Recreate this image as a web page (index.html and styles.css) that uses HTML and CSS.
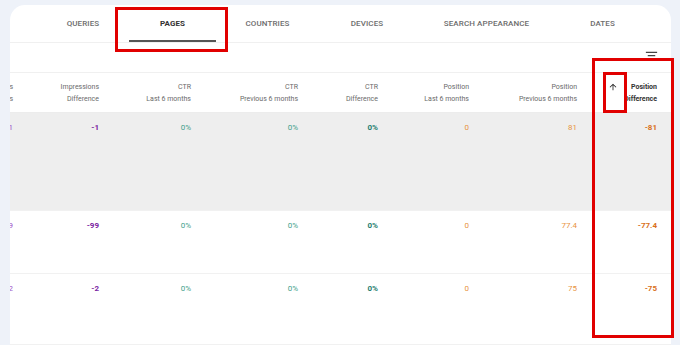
FILE: index.html
```html
<!DOCTYPE html>
<html lang="en">
<head>
    <meta charset="UTF-8">
    <meta name="viewport" content="width=device-width, initial-scale=1.0">
    <title>Pages Report</title>
    <link rel="stylesheet" href="styles.css">
</head>
<body>
    <div class="card">
        <div class="tabs">
            <div class="tab t-queries">QUERIES</div>
            <div class="tab t-pages active">PAGES</div>
            <div class="tab t-countries">COUNTRIES</div>
            <div class="tab t-devices">DEVICES</div>
            <div class="tab t-search">SEARCH APPEARANCE</div>
            <div class="tab t-dates">DATES</div>
        </div>

        <div class="toolbar">
            <svg class="filter-icon" viewBox="0 0 24 24" width="15" height="15">
                <path d="M10 18h4v-2h-4v2zM3 6v2h18V6H3zm3 7h12v-2H6v2z" fill="#444"/>
            </svg>
        </div>

        <div class="table-wrap">
            <div class="row head">
                <div class="cell">Impressions<br>Previous 6 months</div>
                <div class="cell">Impressions<br>Difference</div>
                <div class="cell">CTR<br>Last 6 months</div>
                <div class="cell">CTR<br>Previous 6 months</div>
                <div class="cell">CTR<br>Difference</div>
                <div class="cell">Position<br>Last 6 months</div>
                <div class="cell">Position<br>Previous 6 months</div>
                <div class="cell sorted">
                    <svg class="sort-arrow" viewBox="0 0 24 24" width="10" height="10">
                        <path d="M4 12l1.41 1.41L11 7.83V20h2V7.83l5.58 5.59L20 12l-8-8-8 8z" fill="#222"/>
                    </svg>
                    <span>Position<br>Difference</span>
                </div>
            </div>

            <div class="row body selected r1">
                <div class="cell imp">1</div>
                <div class="cell imp-diff">-1</div>
                <div class="cell ctr">0%</div>
                <div class="cell ctr">0%</div>
                <div class="cell ctr-diff">0%</div>
                <div class="cell pos">0</div>
                <div class="cell pos">81</div>
                <div class="cell pos-diff">-81</div>
            </div>

            <div class="row body r2">
                <div class="cell imp">99</div>
                <div class="cell imp-diff">-99</div>
                <div class="cell ctr">0%</div>
                <div class="cell ctr">0%</div>
                <div class="cell ctr-diff">0%</div>
                <div class="cell pos">0</div>
                <div class="cell pos">77.4</div>
                <div class="cell pos-diff">-77.4</div>
            </div>

            <div class="row body r3">
                <div class="cell imp">2</div>
                <div class="cell imp-diff">-2</div>
                <div class="cell ctr">0%</div>
                <div class="cell ctr">0%</div>
                <div class="cell ctr-diff">0%</div>
                <div class="cell pos">0</div>
                <div class="cell pos">75</div>
                <div class="cell pos-diff">-75</div>
            </div>
        </div>
    </div>

    <!-- annotation boxes drawn over the screenshot -->
    <div class="mark mark-tab"></div>
    <div class="mark mark-col"></div>
    <div class="mark mark-arrow"></div>
</body>
</html>
```

FILE: styles.css
```css
body {
    margin: 0;
    width: 680px;
    height: 345px;
    overflow: hidden;
    background: #eef2f9;
    font-family: Roboto, "Liberation Sans", sans-serif;
}
.card {
    margin: 5px 9px 0 10px;
    height: 340px;
    background: #fff;
    border-radius: 15px 15px 0 0;
    overflow: hidden;
}
.tabs {
    display: flex;
    height: 37px;
    padding-left: 27px;
    border-bottom: 1px solid #f0f0f0;
}
.tab {
    position: relative;
    display: flex;
    align-items: center;
    justify-content: center;
    padding-bottom: 1px;
    font-size: 8px;
    font-weight: 500;
    color: #6d6d6d;
    letter-spacing: 0.1px;
}
.t-queries { width: 92px; }
.t-pages { width: 87px; }
.t-countries { width: 103px; }
.t-devices { width: 96px; }
.t-search { width: 143px; }
.t-dates { width: 89px; }
.tab.active {
    color: #333;
    font-weight: 700;
}
.tab.active::after {
    content: "";
    position: absolute;
    left: 0;
    right: 0;
    bottom: 0;
    height: 2px;
    background: #555;
}
.toolbar {
    display: flex;
    justify-content: flex-end;
    align-items: flex-start;
    height: 29px;
    padding-right: 12px;
    border-bottom: 1px solid #f0f0f0;
}
.filter-icon {
    margin-top: 5px;
}
.table-wrap {
    margin-left: -77px;
}
.row {
    display: grid;
    grid-template-columns: 80px 86px 92px 107px 80px 91px 108px 80px;
}
.cell {
    text-align: right;
}
.head {
    height: 39px;
    align-items: center;
    font-size: 7px;
    line-height: 12px;
    color: #6a6a6a;
    border-bottom: 1px solid #ececec;
}
.head .sorted {
    display: flex;
    justify-content: flex-end;
    align-items: center;
    gap: 6px;
    font-weight: 700;
    color: #333;
}
.sort-arrow {
    margin-bottom: 11px;
}
.body {
    align-items: start;
    padding-top: 10px;
    font-size: 8px;
    line-height: 10px;
    border-bottom: 1px solid #f1f1f1;
    box-sizing: border-box;
}
.selected {
    background: #eeeeee;
}
.r1 { height: 98px; }
.r2 { height: 63px; }
.r3 { height: 71px; }
.imp {
    color: #a052c8;
}
.imp-diff {
    color: #7b1fa2;
    font-weight: 700;
}
.ctr {
    color: #3f9f8c;
}
.ctr-diff {
    color: #1f8070;
    font-weight: 700;
}
.pos {
    color: #e8943f;
}
.pos-diff {
    color: #d9701a;
    font-weight: 700;
}
.mark {
    position: absolute;
    border: 3px solid #e10000;
    box-sizing: border-box;
}
.mark-tab {
    left: 115px;
    top: 7px;
    width: 113px;
    height: 45px;
}
.mark-col {
    left: 592px;
    top: 58px;
    width: 82px;
    height: 280px;
}
.mark-arrow {
    left: 603px;
    top: 72px;
    width: 24px;
    height: 41px;
}
```
